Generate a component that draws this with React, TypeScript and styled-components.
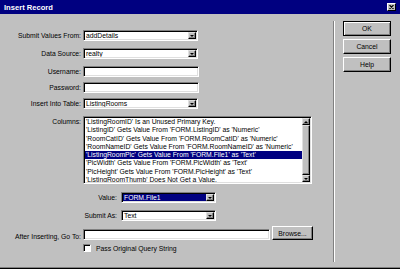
import React from 'react';
import styled, { createGlobalStyle } from 'styled-components';

const GlobalStyle = createGlobalStyle`
  html, body {
    margin: 0;
    padding: 0;
    background: #c0c0c0;
  }
  body {
    font-family: "Liberation Sans", Arial, sans-serif;
    font-size: 6.8px;
    color: #000;
  }
`;

const Window = styled.div`
  width: 400px;
  height: 269px;
  box-sizing: border-box;
  background: #c0c0c0;
  border-bottom: 1px solid #000;
  box-shadow: inset 0 -1px 0 #808080;
  display: flex;
  flex-direction: column;
  overflow: hidden;
`;

const TitleBar = styled.div`
  height: 14px;
  flex-shrink: 0;
  background: #000080;
  color: #fff;
  font-weight: bold;
  font-size: 7.6px;
  padding: 0 4px;
  display: flex;
  align-items: center;
  justify-content: space-between;
`;

const CloseButton = styled.div`
  width: 9px;
  height: 8px;
  box-sizing: border-box;
  background: #c0c0c0;
  border: 1px solid;
  border-color: #fff #000 #000 #fff;
  display: flex;
  align-items: center;
  justify-content: center;
`;

const Body = styled.div`
  flex: 1;
  display: flex;
`;

const FormArea = styled.div`
  width: 333px;
  flex-shrink: 0;
  padding-top: 16px;
  display: flex;
  flex-direction: column;
`;

const Row = styled.div<{ $mt?: number; $align?: string }>`
  display: flex;
  align-items: ${(p) => p.$align || 'center'};
  margin-top: ${(p) => p.$mt || 0}px;
`;

const Label = styled.div<{ $w?: number; $pr?: number; $pt?: number }>`
  width: ${(p) => p.$w || 83}px;
  box-sizing: border-box;
  padding-right: ${(p) => p.$pr ?? 2}px;
  padding-top: ${(p) => p.$pt || 0}px;
  text-align: right;
  white-space: nowrap;
  flex-shrink: 0;
`;

const Sunken = styled.div<{ $w: number; $h?: number }>`
  width: ${(p) => p.$w}px;
  height: ${(p) => p.$h || 11}px;
  box-sizing: border-box;
  background: #fff;
  border-top: 1px solid #808080;
  border-left: 1px solid #808080;
  border-right: 1px solid #fff;
  border-bottom: 1px solid #fff;
  box-shadow: inset 1px 1px 0 #000, inset -1px -1px 0 #dfdfdf;
  padding: 1px;
  display: flex;
  align-items: stretch;
  flex-shrink: 0;
  overflow: hidden;
`;

const FieldText = styled.div<{ $selected?: boolean }>`
  flex: 1;
  padding-left: 1px;
  display: flex;
  align-items: center;
  white-space: nowrap;
  overflow: hidden;
  background: ${(p) => (p.$selected ? '#000080' : 'transparent')};
  color: ${(p) => (p.$selected ? '#fff' : '#000')};
`;

const DropButton = styled.div`
  width: 8px;
  box-sizing: border-box;
  background: #c0c0c0;
  border: 1px solid;
  border-color: #dfdfdf #000 #000 #dfdfdf;
  box-shadow: inset -1px -1px 0 #808080;
  display: flex;
  align-items: center;
  justify-content: center;
`;

const Arrow = styled.div<{ $up?: boolean }>`
  width: 0;
  height: 0;
  border-left: 2px solid transparent;
  border-right: 2px solid transparent;
  ${(p) => (p.$up ? 'border-bottom: 2px solid #000;' : 'border-top: 2px solid #000;')}
`;

const ListItems = styled.div`
  flex: 1;
  display: flex;
  flex-direction: column;
  overflow: hidden;
`;

const ListItem = styled.div<{ $selected?: boolean }>`
  height: 8.25px;
  line-height: 8.25px;
  flex-shrink: 0;
  padding-left: 1px;
  white-space: nowrap;
  background: ${(p) => (p.$selected ? '#000080' : 'transparent')};
  color: ${(p) => (p.$selected ? '#fff' : '#000')};
`;

const ScrollBar = styled.div`
  width: 8px;
  display: flex;
  flex-direction: column;
  background: #e4e4e4;
`;

const ScrollArrow = styled(DropButton)`
  width: 8px;
  height: 7px;
  flex-shrink: 0;
`;

const Thumb = styled.div`
  height: 50px;
  box-sizing: border-box;
  background: #c0c0c0;
  border: 1px solid;
  border-color: #dfdfdf #000 #000 #dfdfdf;
  box-shadow: inset -1px -1px 0 #808080;
`;

const Track = styled.div`
  flex: 1;
`;

const RaisedButton = styled.div<{ $w: number; $h: number; $default?: boolean }>`
  width: ${(p) => p.$w}px;
  height: ${(p) => p.$h}px;
  box-sizing: border-box;
  background: #c0c0c0;
  border: 1px solid;
  border-color: ${(p) => (p.$default ? '#000' : '#fff #000 #000 #fff')};
  box-shadow: ${(p) =>
    p.$default
      ? 'inset 1px 1px 0 #fff, inset -1px -1px 0 #808080'
      : 'inset -1px -1px 0 #808080'};
  display: flex;
  align-items: center;
  justify-content: center;
  flex-shrink: 0;
`;

const Checkbox = styled.div`
  width: 8px;
  height: 8px;
  box-sizing: border-box;
  background: #fff;
  border-top: 1px solid #808080;
  border-left: 1px solid #808080;
  border-right: 1px solid #fff;
  border-bottom: 1px solid #fff;
  box-shadow: inset 1px 1px 0 #000;
  margin-left: 83px;
  margin-right: 5px;
`;

const Separator = styled.div`
  margin-top: 7px;
  height: 241px;
  width: 0;
  border-left: 1px solid #808080;
  border-right: 1px solid #fff;
`;

const ButtonCol = styled.div`
  margin-left: 8px;
  padding-top: 7px;
  display: flex;
  flex-direction: column;
  gap: 3px;
`;

const columns = [
  "'ListingRoomID' Is an Unused Primary Key.",
  "'ListingID' Gets Value From 'FORM.ListingID' as 'Numeric'",
  "'RoomCatID' Gets Value From 'FORM.RoomCatID' as 'Numeric'",
  "'RoomNameID' Gets Value From 'FORM.RoomNameID' as 'Numeric'",
  "'ListingRoomPic' Gets Value From 'FORM.File1' as 'Text'",
  "'PicWidth' Gets Value From 'FORM.PicWidth' as 'Text'",
  "'PicHeight' Gets Value From 'FORM.PicHeight' as 'Text'",
  "'ListingRoomThumb' Does Not Get a Value.",
];

function Select({ w, value, selected }: { w: number; value: string; selected?: boolean }) {
  return (
    <Sunken $w={w}>
      <FieldText $selected={selected}>{value}</FieldText>
      <DropButton>
        <Arrow />
      </DropButton>
    </Sunken>
  );
}

export default function App() {
  return (
    <>
      <GlobalStyle />
      <Window>
        <TitleBar>
          <span>Insert Record</span>
          <CloseButton>
            <svg width="5" height="4" viewBox="0 0 5 4">
              <path d="M0.5 0 L4.5 4 M4.5 0 L0.5 4" stroke="#000" strokeWidth="1.1" />
            </svg>
          </CloseButton>
        </TitleBar>
        <Body>
          <FormArea>
            <Row>
              <Label>Submit Values From:</Label>
              <Select w={115} value="addDetails" />
            </Row>
            <Row $mt={7}>
              <Label>Data Source:</Label>
              <Select w={115} value="realty" />
            </Row>
            <Row $mt={7}>
              <Label>Username:</Label>
              <Sunken $w={116} />
            </Row>
            <Row $mt={5}>
              <Label>Password:</Label>
              <Sunken $w={116} />
            </Row>
            <Row $mt={5}>
              <Label>Insert Into Table:</Label>
              <Select w={115} value="ListingRooms" />
            </Row>
            <Row $mt={7} $align="flex-start">
              <Label $pt={2}>Columns:</Label>
              <Sunken $w={229} $h={68}>
                <ListItems>
                  {columns.map((c, i) => (
                    <ListItem key={c} $selected={i === 4}>
                      {c}
                    </ListItem>
                  ))}
                </ListItems>
                <ScrollBar>
                  <ScrollArrow>
                    <Arrow $up />
                  </ScrollArrow>
                  <Thumb />
                  <Track />
                  <ScrollArrow>
                    <Arrow />
                  </ScrollArrow>
                </ScrollBar>
              </Sunken>
            </Row>
            <Row $mt={8}>
              <Label $w={121} $pr={4}>Value:</Label>
              <Select w={95} value="FORM.File1" selected />
            </Row>
            <Row $mt={7}>
              <Label $w={121} $pr={4}>Submit As:</Label>
              <Select w={95} value="Text" />
            </Row>
            <Row $mt={5} $align="flex-end">
              <Label>After Inserting, Go To:</Label>
              <Sunken $w={187} />
              <RaisedButton $w={41} $h={14} style={{ marginLeft: 2 }}>
                Browse...
              </RaisedButton>
            </Row>
            <Row $mt={4}>
              <Checkbox />
              <span>Pass Original Query String</span>
            </Row>
          </FormArea>
          <Separator />
          <ButtonCol>
            <RaisedButton $w={48} $h={15} $default>
              OK
            </RaisedButton>
            <RaisedButton $w={48} $h={15}>
              Cancel
            </RaisedButton>
            <RaisedButton $w={48} $h={15}>
              Help
            </RaisedButton>
          </ButtonCol>
        </Body>
      </Window>
    </>
  );
}
